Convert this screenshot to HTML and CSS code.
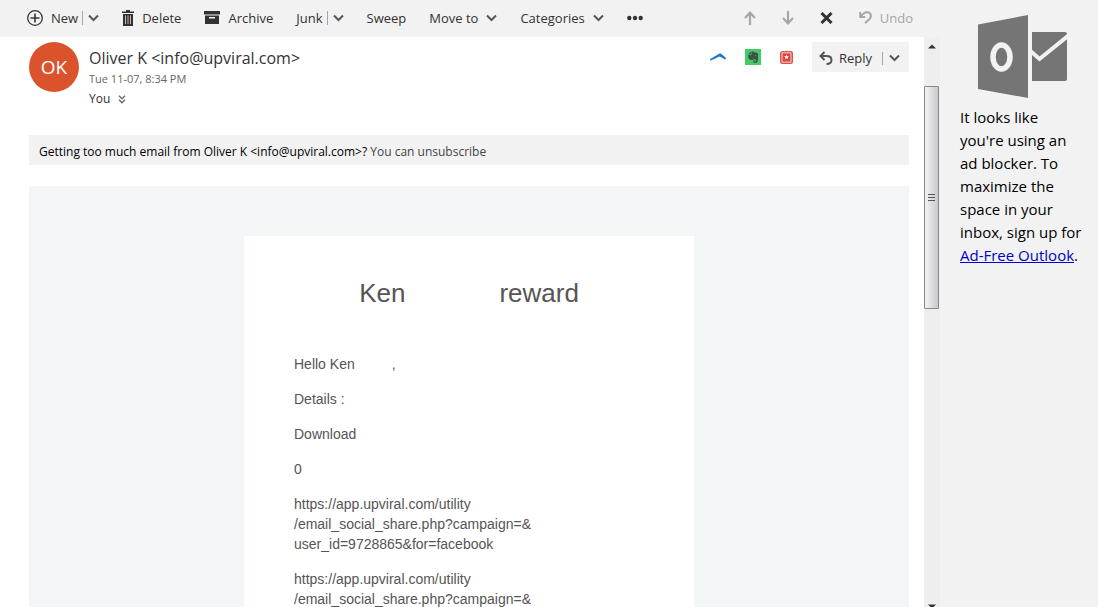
FILE: index.html
```html
<!DOCTYPE html>
<html lang="en">

<head>
    <meta charset="UTF-8">
    <meta name="viewport" content="width=device-width, initial-scale=1.0">
    <title>Outlook Mail</title>
    <link rel="stylesheet" href="styles.css">
</head>

<body>
    <div class="app">
        <div class="main">
            <div class="toolbar">
                <div class="tools">
                    <button type="button">
                        <svg width="16" height="16" viewBox="0 0 16 16" fill="none" stroke="#333"><circle cx="8" cy="8" r="7.3" stroke-width="1.3"/><path d="M8 3.5v9M3.5 8h9" stroke-width="1.6"/></svg>
                        <span class="split">New</span>
                        <svg class="chevron" viewBox="0 0 11 8"><path d="M1 1.5l4.5 4.5L10 1.5"/></svg>
                    </button>
                    <button type="button">
                        <svg width="12" height="16" viewBox="0 0 12 16" fill="#333"><path d="M4 0h4v1.5h4V3H0V1.5h4zM1 4h10v12H1z"/><path d="M3.5 5.5V14M6 5.5V14M8.5 5.5V14" stroke="#c4b8ac"/></svg>
                        <span>Delete</span>
                    </button>
                    <button type="button">
                        <svg width="16" height="13" viewBox="0 0 16 13" fill="#333"><path d="M0 0h16v3.5H0zM1 4.5h14V13H1z"/><path d="M5 6h6v1.5H5z" fill="#f2f2f2"/></svg>
                        <span>Archive</span>
                    </button>
                    <button type="button">
                        <span class="split">Junk</span>
                        <svg class="chevron" viewBox="0 0 11 8"><path d="M1 1.5l4.5 4.5L10 1.5"/></svg>
                    </button>
                    <button type="button">Sweep</button>
                    <button type="button">
                        <span>Move to</span>
                        <svg class="chevron" viewBox="0 0 11 8"><path d="M1 1.5l4.5 4.5L10 1.5"/></svg>
                    </button>
                    <button type="button">
                        <span>Categories</span>
                        <svg class="chevron" viewBox="0 0 11 8"><path d="M1 1.5l4.5 4.5L10 1.5"/></svg>
                    </button>
                    <button type="button" aria-label="More commands">
                        <svg width="16" height="6" viewBox="0 0 16 6" fill="#333"><circle cx="2.3" cy="3" r="2.2"/><circle cx="8" cy="3" r="2.2"/><circle cx="13.7" cy="3" r="2.2"/></svg>
                    </button>
                </div>
                <div class="nav">
                    <button type="button" aria-label="Previous">
                        <svg width="12" height="14" viewBox="0 0 12 14" fill="none" stroke="#a6a6a6" stroke-width="2.2"><path d="M6 14V2M1 7l5-5.3L11 7"/></svg>
                    </button>
                    <button type="button" aria-label="Next">
                        <svg width="12" height="14" viewBox="0 0 12 14" fill="none" stroke="#a6a6a6" stroke-width="2.2"><path d="M6 0v12M1 7l5 5.3L11 7"/></svg>
                    </button>
                    <button type="button" aria-label="Close">
                        <svg width="13" height="12" viewBox="0 0 13 12" fill="none" stroke="#333" stroke-width="3"><path d="M1.500 1l10 10M11.5 1l-10 10"/></svg>
                    </button>
                    <button type="button" class="undo" disabled>
                        <svg width="13" height="13" viewBox="0 0 13 13" fill="none" stroke="#a6a6a6" stroke-width="2"><path d="M1.2 1v5h5M1.5 5.7C4 2.500 7 .5 9.7 1.5c3 1.3 3 5 .3 7L6 12"/></svg>
                        <span>Undo</span>
                    </button>
                </div>
            </div>

            <div class="pane">
                <div class="message">
                    <div class="header">
                        <div class="avatar">OK</div>
                        <div class="sender">
                            <div class="from">Oliver K &lt;info@upviral.com&gt;</div>
                            <div class="date">Tue 11-07, 8:34 PM</div>
                            <div class="to">
                                <span>You</span>
                                <svg width="8" height="9" viewBox="0 0 8 9" fill="none" stroke="#666" stroke-width="1.3"><path d="M1 .8l3 3 3-3M1 4.8l3 3 3-3"/></svg>
                            </div>
                        </div>
                        <div class="actions">
                            <button type="button" aria-label="Boomerang">
                                <svg width="16" height="8" viewBox="0 0 16 8" fill="#1c78c8"><path d="M0 6C3.5 4.5 6.500 2 9 .7c1-.5 2-.3 2.800.5L16 5l-.6 1.800C13.500 5.500 11.500 4.300 9.700 3.600 7 4.300 4 6.500.5 7.800z"/></svg>
                            </button>
                            <button type="button" aria-label="Evernote">
                                <svg width="16" height="16" viewBox="0 0 16 16"><path d="M0 0h16v16H0z" fill="#43cc65"/><path d="M3 5.5L6 2.5v2.8H3.2zM6.500 2.5h2l.7.8 2.7.5c.9.2 1.100 1 1.100 2 .1 3 0 5.500-.7 7.200-.4.8-1.200 1-2.200 1-1.300 0-2-.8-2-1.700 0-1 .6-1.600 1.600-1.600v1c-.7.1-.7 1.200.2 1.200.8 0 1-.7.9-2.100-.5-.8-1.300-.6-1.900-.7-.3.7-1.200 1-2.400.9C4.500 10.900 3.200 10 3 6h3.500z" fill="#405048"/><path d="M9.800 6.200q1.100-.7 1.500.8z" fill="#43cc65"/></svg>
                            </button>
                            <button type="button" aria-label="Save template">
                                <svg width="13" height="13" viewBox="0 0 13 13"><rect width="13" height="13" rx="2.5" fill="#dc5149"/><path d="M2 1.800h9v9.400H2z" fill="none" stroke="#f7cfcb"/><path d="M3.500 3h6v7L6.500 8.500 3.500 10z" fill="#dc4039"/><path d="M6.500 3.500l.7 1.700 1.800.1-1.400 1.200.5 1.800-1.600-1-1.600 1 .5-1.800L4 5.300l1.800-.1z" fill="#fff"/></svg>
                            </button>
                            <button type="button" class="reply">
                                <svg width="14" height="14" viewBox="0 0 14 14" fill="none" stroke="#555" stroke-width="2"><path d="M5.5 1L1.5 5l4 4M1.5 5h6c3.5 0 5 1.500 5 4s-1.500 4-5 4"/></svg>
                                <span>Reply</span>
                                <span class="divider"></span>
                                <svg class="chevron" viewBox="0 0 11 8"><path d="M1 1.5l4.5 4.5L10 1.5"/></svg>
                            </button>
                        </div>
                    </div>

                    <div class="notice">
                        Getting too much email from Oliver K &lt;info@upviral.com&gt;? <a href="#">You can unsubscribe</a>
                    </div>

                    <div class="email">
                        <div class="card">
                            <h1><span>Ken</span> <span>reward</span></h1>
                            <p class="hello"><span>Hello Ken</span> <span>,</span></p>
                            <p>Details :</p>
                            <p>Download</p>
                            <p>0</p>
                            <p>https://app.upviral.com/utility<br>/email_social_share.php?campaign=&amp;<br>user_id=9728865&amp;for=facebook</p>
                            <p>https://app.upviral.com/utility<br>/email_social_share.php?campaign=&amp;</p>
                        </div>
                    </div>
                </div>

                <div class="scrollbar">
                    <svg width="8" height="5" viewBox="0 0 8 5"><path d="M0 4.5L4 .5l4 4z" fill="#333"/></svg>
                    <div class="thumb">
                        <svg width="7" height="8" viewBox="0 0 7 8" stroke="#555"><path d="M0 .5h7M0 3.5h7M0 6.5h7"/></svg>
                    </div>
                    <svg class="down" width="8" height="5" viewBox="0 0 8 5"><path d="M0 .5h8l-4 4z" fill="#333"/></svg>
                </div>
            </div>
        </div>

        <aside class="side">
            <svg width="90" height="84" viewBox="0 0 90 84" fill="#757575">
                <path d="M0 9.5L50 0v83L0 74z"/>
                <path d="M54 17h33q2 0 2 2v45q0 2-2 2H54z"/>
                <ellipse cx="23.5" cy="42" rx="8.5" ry="12" fill="none" stroke="#f2f2f2" stroke-width="5.5"/>
                <path d="M53 36.500l8.500 7.500L91 20" fill="none" stroke="#f2f2f2" stroke-width="4"/>
            </svg>
            <p>It looks like you're using an ad blocker. To maximize the space in your inbox, sign up for <a href="#">Ad-Free Outlook</a>.</p>
        </aside>
    </div>
</body>

</html>
```
FILE: styles.css
```css
* {
    padding: 0;
    margin: 0;
    box-sizing: border-box;
}

body {
    font-family: "Open Sans", "Noto Sans", sans-serif;
    font-size: 13px;
    color: #333;
    background-color: #f2f2f2;
}

button {
    display: flex;
    align-items: center;
    border: none;
    background: none;
    font: inherit;
    color: inherit;
    cursor: pointer;
}

svg {
    display: block;
    flex-shrink: 0;
}

.app {
    display: flex;
    height: 100vh;
    overflow: hidden;
}

.main {
    flex: 1;
    display: flex;
    flex-direction: column;
    min-width: 0;
}

/* toolbar */
.toolbar {
    display: flex;
    justify-content: space-between;
    height: 37px;
    padding: 0 27px 2px;
}

.tools,
.nav {
    display: flex;
    align-items: center;
}

.tools {
    gap: 23px;
}

.tools button {
    gap: 8px;
}

.nav {
    gap: 26px;
}

.nav .undo {
    gap: 8px;
    color: #a6a6a6;
}

.chevron {
    width: 11px;
    height: 8px;
    fill: none;
    stroke: #555;
    stroke-width: 2;
}

.split {
    margin-right: -3px;
    padding-right: 4px;
    border-right: 1px solid #a6a6a6;
    line-height: 14px;
}

/* reading pane */
.pane {
    flex: 1;
    display: flex;
    min-height: 0;
    background-color: white;
}

.message {
    flex: 1;
    padding: 5px 15px 0 29px;
    overflow: hidden;
}

.header {
    display: flex;
    height: 93px;
}

.avatar {
    display: flex;
    justify-content: center;
    align-items: center;
    width: 50px;
    height: 50px;
    border-radius: 50%;
    background-color: #da532c;
    color: white;
    font-size: 19px;
}

.sender {
    flex: 1;
    padding: 5px 0 0 10px;
}

.from {
    font-size: 16px;
    line-height: 22px;
}

.date {
    font-size: 11px;
    line-height: 20px;
    color: #666;
}

.to {
    display: flex;
    align-items: center;
    gap: 8px;
    font-size: 12px;
    line-height: 20px;
}

.actions {
    display: flex;
    height: 30px;
    gap: 19px;
}

.reply {
    gap: 6px;
    padding: 2px 9px 0 7px;
    background-color: #f2f2f2;
}

.divider {
    width: 1px;
    height: 13px;
    margin-left: 4px;
    background-color: #a6a6a6;
}

.notice {
    height: 30px;
    padding-left: 10px;
    line-height: 33px;
    font-size: 12px;
    color: black;
    background-color: #f2f2f2;
}

.notice a {
    color: #444;
    text-decoration: none;
}

/* the mail itself */
.email {
    margin-top: 21px;
    padding-top: 50px;
    background-color: #f2f6f7;
    font-family: "Liberation Sans", Arial, sans-serif;
    color: #555;
}

.card {
    max-width: 450px;
    min-height: 600px;
    margin: 0 auto;
    padding: 40px 50px;
    background-color: white;
}

.card h1 {
    display: flex;
    justify-content: center;
    gap: 94px;
    margin-bottom: 44px;
    font-size: 26px;
    font-weight: normal;
    line-height: 34px;
}

.card p {
    margin-bottom: 15px;
    font-size: 14px;
    line-height: 20px;
}

.card .hello {
    display: flex;
    gap: 37px;
}

/* scrollbar */
.scrollbar {
    display: flex;
    flex-direction: column;
    align-items: center;
    width: 16px;
    padding: 7px 1px 0 0;
    background-color: #eee;
}

.thumb {
    display: flex;
    justify-content: center;
    align-items: center;
    width: 15px;
    height: 223px;
    margin-top: 37px;
    border: 1px solid #888;
    border-radius: 1px;
    background: linear-gradient(to right, #f4f4f4, #c8c8ce);
}

.down {
    margin: auto 0 -2px;
}

/* ad blocker note */
.side {
    width: 158px;
    padding: 15px 14px 0 20px;
}

.side svg {
    margin-left: 18px;
}

.side p {
    margin-top: 7px;
    font-size: 15px;
    line-height: 23px;
    color: black;
}

.side a {
    color: #0000cc;
}
```
